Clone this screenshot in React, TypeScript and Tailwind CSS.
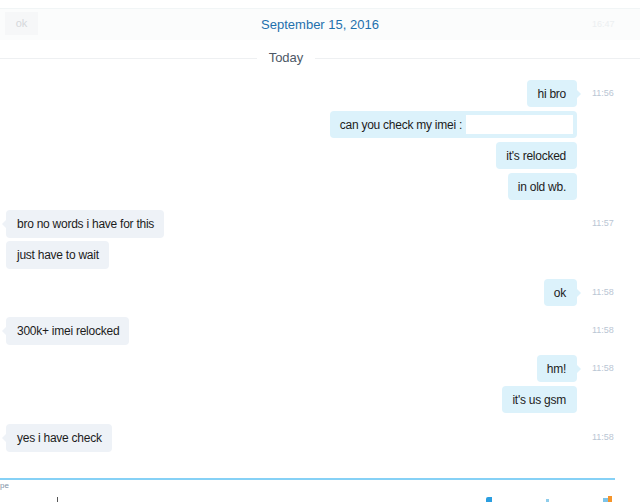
import React from "react";

function Right({ text, time, tail, mt }: { text: React.ReactNode; time?: string; tail?: boolean; mt: string }) {
  return (
    <div className={`flex items-center ${mt}`}>
      <div className="flex-1 flex justify-end">
        <div className="relative h-[27px] pl-[10px] pr-[11px] flex items-center rounded-[4px] bg-[#dcf2fb] text-[12px] tracking-[-0.25px] text-[#1c1c1c]">
          {text}
          {tail && (
            <div className="absolute right-[-4px] top-[10px] w-0 h-0 border-y-[4px] border-y-transparent border-l-[4px] border-l-[#dcf2fb]" />
          )}
        </div>
      </div>
      <div className="w-[63px] pl-[15px] text-[9px] text-[#bac6d4]">{time}</div>
    </div>
  );
}

function Left({ text, time, tail, mt }: { text: React.ReactNode; time?: string; tail?: boolean; mt: string }) {
  return (
    <div className={`flex items-center ${mt}`}>
      <div className="flex-1 flex justify-start pl-[6px]">
        <div className="relative h-[28px] pl-[11px] pr-[10px] flex items-center rounded-[4px] bg-[#eef2f7] text-[12px] tracking-[-0.25px] text-[#1c1c1c]">
          {text}
          {tail && (
            <div className="absolute left-[-4px] top-[10px] w-0 h-0 border-y-[4px] border-y-transparent border-r-[4px] border-r-[#eef2f7]" />
          )}
        </div>
      </div>
      <div className="w-[63px] pl-[15px] text-[9px] text-[#bac6d4]">{time}</div>
    </div>
  );
}

export default function App() {
  return (
    <div className="w-[640px] h-[502px] overflow-hidden bg-white relative" style={{ fontFamily: '"Helvetica Neue", "Liberation Sans", Arial, sans-serif' }}>
      <div className="h-[8px]" />
      <div className="h-[32px] border-t border-[#f1f5f6] bg-[#fbfcfc] flex items-center relative">
        <div className="absolute left-[5px] top-[3px] w-[33px] h-[23px] bg-[#f6f7f8] flex items-center justify-center text-[11px] text-[#d5d8db]">ok</div>
        <div className="flex-1 text-center text-[13px] text-[#1f70ad]">September 15, 2016</div>
        <div className="absolute left-[592px] text-[9px] text-[#eceff1]">16:47</div>
      </div>
      <div className="flex items-center mt-[10px] h-[16px]">
        <div className="w-[257px] h-px bg-[#eef0f2]" />
        <div className="w-[58px] text-center text-[13px] text-[#4d5866]">Today</div>
        <div className="flex-1 h-px bg-[#eef0f2]" />
      </div>
      <Right mt="mt-[14px]" text="hi bro" time="11:56" tail />
      <Right
        mt="mt-[4px]"
        text={
          <span className="flex items-center">
            can you check my imei :<span className="ml-[4px] mr-[-7px] inline-block w-[107px] h-[19px] bg-white" />
          </span>
        }
      />
      <Right mt="mt-[4px]" text="it's relocked" />
      <Right mt="mt-[4px]" text="in old wb." />
      <Left mt="mt-[10px]" text="bro no words i have for this" time="11:57" tail />
      <Left mt="mt-[3px]" text="just have to wait" />
      <Right mt="mt-[10px]" text="ok" time="11:58" tail />
      <Left mt="mt-[11px]" text="300k+ imei relocked" time="11:58" tail />
      <Right mt="mt-[10px]" text="hm!" time="11:58" tail />
      <Right mt="mt-[4px]" text="it's us gsm" />
      <Left mt="mt-[11px]" text="yes i have check" time="11:58" tail />
      <div className="mt-[26px] w-[615px] h-[2px] bg-[#86d1f6]" />
      <div className="text-[8px] leading-[10px] mt-[1px] text-[#7f94a8]">pe</div>
      <div className="absolute left-[57px] top-[497px] w-px h-[5px] bg-[#555]" />
      <div className="absolute left-[486px] top-[497px] w-[6px] h-[5px] bg-[#2b9ee0] rounded-tl-[2px]" />
      <div className="absolute left-[546px] top-[499px] w-[3px] h-[3px] bg-[#8fcdeb]" />
      <div className="absolute left-[603px] top-[498px] w-[5px] h-[4px] bg-[#7cc3e8]" />
      <div className="absolute left-[608px] top-[496px] w-[4px] h-[6px] bg-[#f5952b]" />
    </div>
  );
}
